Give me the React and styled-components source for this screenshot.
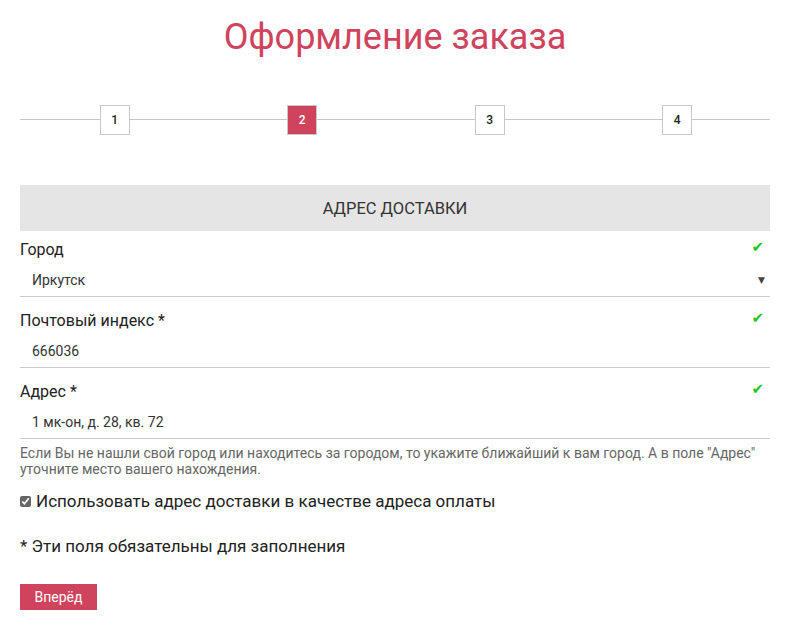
import React from "react";
import styled, { createGlobalStyle } from "styled-components";

const GlobalStyle = createGlobalStyle`
  body {
    margin: 0;
    background: #fff;
    font-family: Roboto, "Liberation Sans", sans-serif;
    color: #222;
  }
`;

const Page = styled.div`
  padding: 0 21px 0 20px;
`;

const Title = styled.h1`
  margin: 0;
  padding-top: 15px;
  text-align: center;
  font-size: 36px;
  font-weight: 400;
  line-height: 44px;
  color: #cf435c;
`;

const Steps = styled.div`
  position: relative;
  display: grid;
  grid-template-columns: repeat(4, 1fr);
  margin-top: 46px;
  height: 30px;

  &::before {
    content: "";
    position: absolute;
    left: 0;
    right: 0;
    top: 14px;
    height: 1px;
    background: #c8c8c8;
  }
`;

const StepCell = styled.div`
  display: flex;
  justify-content: center;
  padding-left: 2px;
`;

const StepBox = styled.div`
  position: relative;
  width: 28px;
  height: 28px;
  border: 1px solid #c8c8c8;
  background: ${({ $active }) => ($active ? "#cf435c" : "#fff")};
  color: ${({ $active }) => ($active ? "#fff" : "#222")};
  font-size: 12px;
  font-weight: 500;
  display: flex;
  align-items: center;
  justify-content: center;
`;

const SectionHead = styled.div`
  margin-top: 50px;
  height: 46px;
  background: #e5e5e5;
  display: flex;
  align-items: center;
  justify-content: center;
  font-size: 16.5px;
  color: #333;
`;

const Field = styled.div`
  border-bottom: 1px solid #cccccc;
  display: flex;
  flex-direction: column;
`;

const LabelRow = styled.div`
  display: flex;
  justify-content: space-between;
  align-items: center;
  height: ${({ $first }) => ($first ? "33px" : "38px")};
  padding-top: ${({ $first }) => ($first ? "3px" : "8px")};
  box-sizing: border-box;
  font-size: 16px;
  color: #222;
`;

const Check = styled.span`
  color: #1ec81e;
  font-size: 15px;
  line-height: 1;
  font-family: "DejaVu Sans", sans-serif;
  margin-right: 6px;
  margin-top: -4px;
`;

const ValueRow = styled.div`
  display: flex;
  justify-content: space-between;
  align-items: center;
  height: 32px;
  padding-left: 12px;
  font-size: 14px;
  color: #333;
`;

const Arrow = styled.span`
  font-size: 9px;
  color: #444;
  margin-right: 5px;
  font-family: "DejaVu Sans", sans-serif;
`;

const Note = styled.p`
  margin: 6px 0 0;
  font-size: 14px;
  line-height: 16px;
  color: #666;
`;

const CheckLabel = styled.label`
  display: flex;
  align-items: center;
  gap: 5px;
  margin-top: 14px;
  font-size: 17px;
  color: #222;

  input {
    margin: 0;
    width: 11px;
    height: 11px;
    accent-color: #666;
  }
`;

const Required = styled.p`
  margin: 25px 0 0;
  font-size: 17px;
  color: #222;
`;

const NextButton = styled.button`
  display: block;
  margin-top: 28px;
  height: 26px;
  width: 77px;
  padding: 0;
  background: #cf435c;
  border: none;
  color: #fff;
  font-family: Roboto, "Liberation Sans", sans-serif;
  font-size: 14px;
  cursor: pointer;
`;

const fields = [
  { label: "Город", value: "Иркутск", select: true },
  { label: "Почтовый индекс *", value: "666036" },
  { label: "Адрес *", value: "1 мк-он, д. 28, кв. 72" },
];

export default function App() {
  return (
    <>
      <GlobalStyle />
      <Page>
        <Title>Оформление заказа</Title>
        <Steps>
          {[1, 2, 3, 4].map((n) => (
            <StepCell key={n}>
              <StepBox $active={n === 2}>{n}</StepBox>
            </StepCell>
          ))}
        </Steps>
        <SectionHead>АДРЕС ДОСТАВКИ</SectionHead>
        {fields.map((f, i) => (
          <Field key={f.label}>
            <LabelRow $first={i === 0}>
              <span>{f.label}</span>
              <Check>✔</Check>
            </LabelRow>
            <ValueRow>
              <span>{f.value}</span>
              {f.select && <Arrow>▼</Arrow>}
            </ValueRow>
          </Field>
        ))}
        <Note>
          Если Вы не нашли свой город или находитесь за городом, то укажите
          ближайший к вам город. А в поле "Адрес" уточните место вашего
          нахождения.
        </Note>
        <CheckLabel>
          <input type="checkbox" defaultChecked />
          Использовать адрес доставки в качестве адреса оплаты
        </CheckLabel>
        <Required>* Эти поля обязательны для заполнения</Required>
        <NextButton>Вперёд</NextButton>
      </Page>
    </>
  );
}
